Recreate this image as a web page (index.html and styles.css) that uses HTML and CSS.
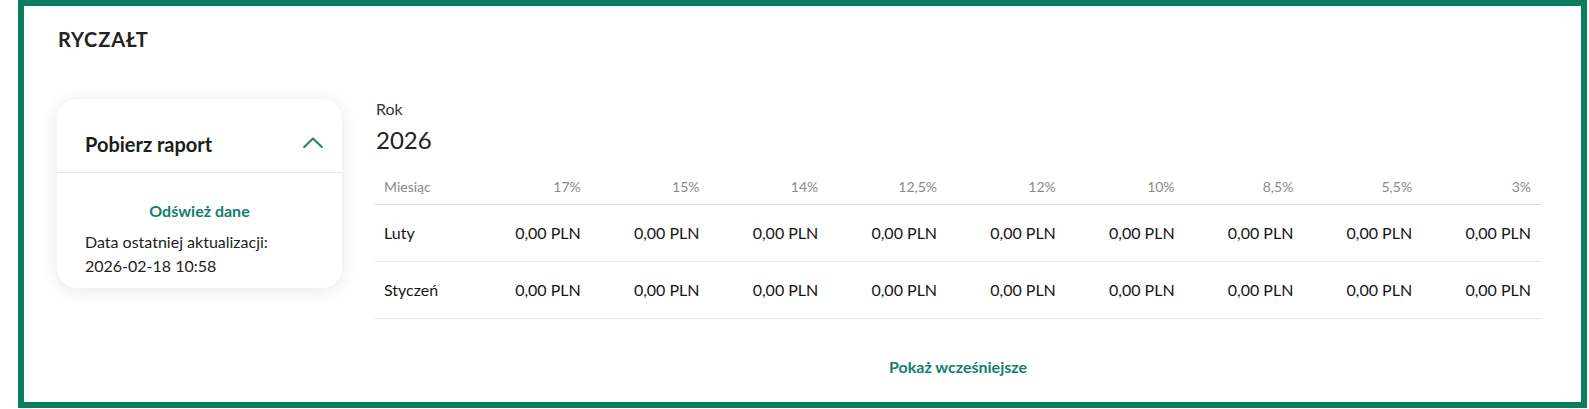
FILE: index.html
```html
<!DOCTYPE html>
<html lang="pl">
<head>
<meta charset="utf-8">
<title>Ryczałt</title>
<link rel="stylesheet" href="styles.css">
</head>
<body>
<div class="frame">
  <h2 class="section-title">RYCZAŁT</h2>
  <div class="content">
    <aside class="card">
      <div class="card-header">
        <span class="card-title">Pobierz raport</span>
        <svg class="chevron" width="20" height="11" viewBox="0 0 20 11" aria-hidden="true">
          <path d="M1.2 10 L10 1.5 L18.8 10" fill="none" stroke="#15876b" stroke-width="2" stroke-linecap="round" stroke-linejoin="round"/>
        </svg>
      </div>
      <div class="card-body">
        <a class="refresh" href="#">Odśwież dane</a>
        <p class="updated">Data ostatniej aktualizacji:<br>2026-02-18 10:58</p>
      </div>
    </aside>
    <section class="main">
      <div class="year-label">Rok</div>
      <div class="year">2026</div>
      <table class="rates">
        <colgroup>
          <col class="col-month">
          <col><col><col><col><col><col><col><col><col>
        </colgroup>
        <thead>
          <tr>
            <th class="month">Miesiąc</th>
            <th>17%</th><th>15%</th><th>14%</th><th>12,5%</th><th>12%</th><th>10%</th><th>8,5%</th><th>5,5%</th><th>3%</th>
          </tr>
        </thead>
        <tbody>
          <tr>
            <td class="month">Luty</td>
            <td>0,00 PLN</td><td>0,00 PLN</td><td>0,00 PLN</td><td>0,00 PLN</td><td>0,00 PLN</td><td>0,00 PLN</td><td>0,00 PLN</td><td>0,00 PLN</td><td>0,00 PLN</td>
          </tr>
          <tr>
            <td class="month">Styczeń</td>
            <td>0,00 PLN</td><td>0,00 PLN</td><td>0,00 PLN</td><td>0,00 PLN</td><td>0,00 PLN</td><td>0,00 PLN</td><td>0,00 PLN</td><td>0,00 PLN</td><td>0,00 PLN</td>
          </tr>
        </tbody>
      </table>
      <div class="more-wrap"><a class="more" href="#">Pokaż wcześniejsze</a></div>
    </section>
  </div>
</div>
</body>
</html>
```
FILE: styles.css
```css
html, body {
  margin: 0;
  padding: 0;
  background: #ffffff;
}
body {
  font-family: Lato, "Open Sans", "Liberation Sans", sans-serif;
  color: #222222;
}
.frame {
  box-sizing: border-box;
  margin-left: 18px;
  width: 1569px;
  height: 408px;
  border: 6px solid #0a7d61;
  background: #ffffff;
  padding: 21px 40px 0 33px;
}
.section-title {
  margin: 0 0 0 1px;
  font-size: 20px;
  line-height: 24px;
  font-weight: 700;
  letter-spacing: 0.9px;
  color: #222222;
}
.content {
  display: flex;
  align-items: flex-start;
  gap: 33px;
  margin-top: 48px;
}
.card {
  width: 285px;
  flex: none;
  background: #ffffff;
  border-radius: 20px;
  box-shadow: 0 2px 16px rgba(0, 0, 0, 0.10);
}
.card-header {
  display: flex;
  align-items: center;
  justify-content: space-between;
  padding: 33px 19px 16px 28px;
  border-bottom: 1px solid #e8e8e8;
}
.card-title {
  font-size: 20px;
  line-height: 24px;
  font-weight: 700;
  color: #1c1c1c;
}
.chevron {
  display: block;
  margin-top: -3px;
}
.card-body {
  padding: 26px 28px 10px;
}
.refresh {
  display: block;
  text-align: center;
  font-size: 16px;
  line-height: 24px;
  font-weight: 700;
  color: #12806a;
  text-decoration: none;
  margin-bottom: 7px;
}
.updated {
  margin: 0;
  font-size: 16px;
  line-height: 24px;
  color: #222222;
}
.main {
  flex: 1;
  min-width: 0;
}
.year-label {
  padding-left: 1px;
  font-size: 16px;
  line-height: 20px;
  color: #333333;
}
.year {
  margin-top: 6px;
  padding-left: 1px;
  font-size: 24px;
  line-height: 30px;
  color: #222222;
}
.rates {
  width: 100%;
  margin-top: 11px;
  border-collapse: collapse;
  table-layout: fixed;
}
.col-month {
  width: 97px;
}
.rates th {
  font-size: 14px;
  line-height: 20px;
  font-weight: 400;
  color: #8a8a8a;
  text-align: right;
  padding: 11px 10px 7px;
  border-bottom: 1px solid #dcdcdc;
  white-space: nowrap;
}
.rates td {
  font-size: 16px;
  line-height: 24px;
  color: #161616;
  text-align: right;
  padding: 16px 10px;
  border-bottom: 1px solid #e8e8e8;
  white-space: nowrap;
}
.rates .month {
  text-align: left;
  padding-left: 9px;
}
.more-wrap {
  margin-top: 36px;
  text-align: center;
}
.more {
  font-size: 16px;
  line-height: 24px;
  font-weight: 700;
  color: #12806a;
  text-decoration: none;
}
```
